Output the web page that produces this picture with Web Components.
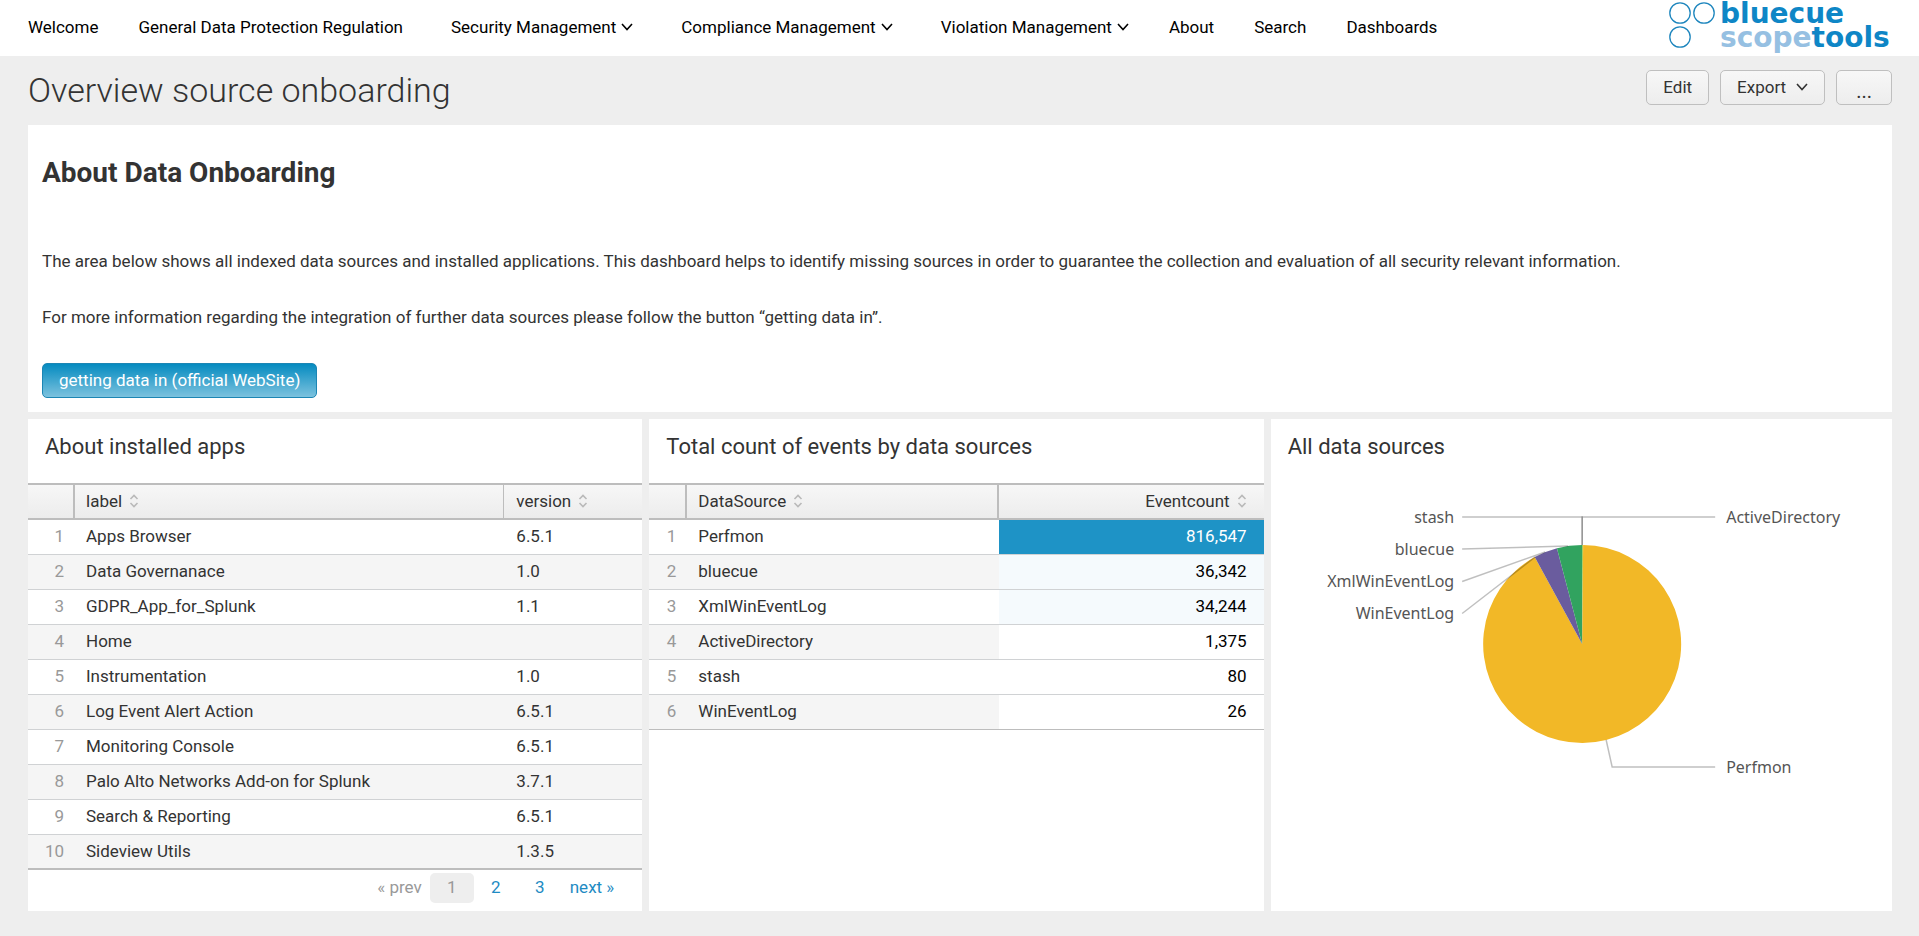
<!DOCTYPE html>
<html lang="en">
<head>
<meta charset="utf-8">
<title>Overview source onboarding</title>
<style>
body { margin: 0; background: #eee; color: #333; font: 17px/24px Roboto, "Liberation Sans", sans-serif; }
</style>
</head>
<body>
<app-bar></app-bar>
<main>
  <dashboard-header heading="Overview source onboarding"></dashboard-header>
  <dashboard-body>
    <intro-panel slot="intro" heading="About Data Onboarding">
      <p>The area below shows all indexed data sources and installed applications. This dashboard helps to identify missing sources in order to guarantee the collection and evaluation of all security relevant information.</p>
      <p>For more information regarding the integration of further data sources please follow the button “getting data in”.</p>
    </intro-panel>
    <dashboard-panel heading="About installed apps">
      <apps-table></apps-table>
      <page-nav></page-nav>
    </dashboard-panel>
    <dashboard-panel heading="Total count of events by data sources">
      <events-table></events-table>
    </dashboard-panel>
    <dashboard-panel heading="All data sources">
      <source-pie></source-pie>
    </dashboard-panel>
  </dashboard-body>
</main>
<script>
class BaseElement extends HTMLElement {
  connectedCallback() {
    if (this.shadowRoot) return;
    this.attachShadow({ mode: 'open' }).innerHTML =
      `<style>:host,*{box-sizing:border-box}${this.styles()}</style>${this.markup()}`;
  }
}

const chevron = '<svg class="chev" width="12" height="8" viewBox="0 0 12 8" aria-hidden="true"><path d="M1 1l5 5.5L11 1" fill="none" stroke="currentColor" stroke-width="1.6"/></svg>';

customElements.define('brand-logo', class extends BaseElement {
  styles() { return `:host{display:block}svg{display:block}text{font:700 28px "DejaVu Sans",sans-serif}`; }
  markup() {
    return `<svg width="225" height="56" viewBox="0 0 225 56" role="img" aria-label="bluecue scopetools">
      <g fill="#fff" stroke="#1c85bd" stroke-width="1.3"><circle cx="13" cy="13" r="10.2"/><circle cx="37" cy="13" r="10.2"/><circle cx="13" cy="37" r="10.2"/></g>
      <text x="53" y="23" fill="#0e86c6">bluecue</text>
      <text x="53" y="47" fill="#96c0e2">scope<tspan fill="#0e86c6">tools</tspan></text></svg>`;
  }
});

customElements.define('app-bar', class extends BaseElement {
  styles() { return `
    :host{display:flex;justify-content:space-between;height:56px;background:#fff;padding:0 27px 2px 8px}
    nav{display:flex;align-items:center}
    a,button{font:inherit;color:#000;text-decoration:none;background:none;border:0;padding:0 20px;white-space:nowrap}
    button{display:flex;align-items:center;gap:5px;margin-left:8px}`; }
  markup() {
    const items = [['Welcome'], ['General Data Protection Regulation'], ['Security Management', 1], ['Compliance Management', 1], ['Violation Management', 1], ['About'], ['Search'], ['Dashboards']];
    return `<nav>${items.map(([t, menu]) => menu ? `<button>${t}${chevron}</button>` : `<a href="#">${t}</a>`).join('')}</nav><brand-logo></brand-logo>`;
  }
});

customElements.define('dashboard-header', class extends BaseElement {
  styles() { return `
    :host{display:flex;justify-content:space-between;height:69px;padding:14px 27px 0 28px}
    h1{margin:0;font-size:34px;line-height:40px;font-weight:300}
    div{display:flex;gap:11px}
    button{height:35px;padding:0 16px 2px;font:inherit;color:#333;border:1px solid #bfbfbf;border-radius:5px;background:linear-gradient(#f7f7f7,#ededed);display:flex;align-items:center;gap:10px}
    .more{padding:6px 19px 0;font-size:20px}`; }
  markup() { return `<h1>${this.getAttribute('heading')}</h1><div><button>Edit</button><button>Export${chevron}</button><button class="more" aria-label="More actions">...</button></div>`; }
});

customElements.define('dashboard-body', class extends BaseElement {
  styles() { return `
    :host{display:block;padding:0 27px 26px 28px}
    .row{display:grid;grid-template-columns:repeat(3,minmax(0,1fr));margin-top:7px}
    .row ::slotted(*){padding-right:7px}
    .row ::slotted(:last-child){padding-right:0}`; }
  markup() { return `<slot name="intro"></slot><div class="row"><slot></slot></div>`; }
});

customElements.define('intro-panel', class extends BaseElement {
  styles() { return `
    :host{display:block;background:#fff;padding:28px 14px 14px}
    h2{margin:0 0 56px;font-size:28px;line-height:40px;font-weight:700}
    ::slotted(p){margin:0 0 32px}
    a{display:inline-block;height:35px;margin-top:2px;padding:0 16px;line-height:32px;color:#fff;text-decoration:none;border:1px solid #1c86b4;border-radius:5px;background:linear-gradient(#058bc0,#7cc2de);vertical-align:top}`; }
  markup() { return `<h2>${this.getAttribute('heading')}</h2><slot></slot><a href="#">getting data in (official WebSite)</a>`; }
});

customElements.define('dashboard-panel', class extends BaseElement {
  styles() { return `
    :host{display:flex}
    section{background:#fff;flex:1;min-width:0}
    h3{margin:0;padding:16px 17px 24px;font-size:22px;line-height:24px;font-weight:400}`; }
  markup() { return `<section><h3>${this.getAttribute('heading')}</h3><slot></slot></section>`; }
});

const sorter = '<svg class="sort" width="10" height="14" viewBox="0 0 10 14" aria-hidden="true"><path d="M1.5 5L5 1.5 8.5 5M1.5 9L5 12.5 8.5 9" fill="none" stroke="#b9b9b9" stroke-width="1.6"/></svg>';
const tableStyles = `
  :host{display:block}
  table{width:100%;table-layout:fixed;border-collapse:separate;border-spacing:0}
  th,td{height:35px;padding:0 11px 2px;text-align:left;font-weight:400;border-bottom:1px solid #d0d2d4;white-space:nowrap}
  th{height:37px;border-top:2px solid #bdbdbd;border-bottom:2px solid #bdbdbd;background:linear-gradient(#f7f7f7,#ececec)}
  .sort{margin-left:7px;vertical-align:-1px}
  th:first-child{border-right:2px solid #bdbdbd}
  td:first-child{padding-left:0;text-align:right;color:#999}
  tr:nth-child(even) td{background:#f5f5f5}
  tr:last-child td{border-bottom-color:#bdbdbd}`;

customElements.define('apps-table', class extends BaseElement {
  styles() { return tableStyles + `
    .n{width:47px}.v{width:139px}th:last-child{border-left:1px solid #bdbdbd;padding-left:12px}td:last-child{padding-left:13px}
    tr:last-child td{border-bottom-width:2px}`; }
  markup() {
    const rows = [['Apps Browser', '6.5.1'], ['Data Governanace', '1.0'], ['GDPR_App_for_Splunk', '1.1'], ['Home', ''], ['Instrumentation', '1.0'], ['Log Event Alert Action', '6.5.1'], ['Monitoring Console', '6.5.1'], ['Palo Alto Networks Add-on for Splunk', '3.7.1'], ['Search &amp; Reporting', '6.5.1'], ['Sideview Utils', '1.3.5']];
    return `<table><colgroup><col class="n"><col><col class="v"></colgroup><thead><tr><th></th><th>label${sorter}</th><th>version${sorter}</th></tr></thead>
      <tbody>${rows.map((r, i) => `<tr><td>${i + 1}</td><td>${r[0]}</td><td>${r[1]}</td></tr>`).join('')}</tbody></table>`;
  }
});

customElements.define('events-table', class extends BaseElement {
  styles() { return tableStyles + `
    .n{width:38px}.v{width:265px}
    th:nth-child(2){border-right:2px solid #bdbdbd}
    th:last-child,td:last-child{text-align:right;padding-right:17px;color:#000}
    th:last-child{color:#333}
    tbody tr td:last-child{background:var(--heat)}
    tr:first-child td:last-child{color:#fff}`; }
  markup() {
    const rows = [['Perfmon', '816,547', '#1e93c6'], ['bluecue', '36,342', '#f5fafd'], ['XmlWinEventLog', '34,244', '#f5fafd'], ['ActiveDirectory', '1,375', '#fff'], ['stash', '80', '#fff'], ['WinEventLog', '26', '#fff']];
    return `<table><colgroup><col class="n"><col><col class="v"></colgroup><thead><tr><th></th><th>DataSource${sorter}</th><th>Eventcount${sorter}</th></tr></thead>
      <tbody>${rows.map((r, i) => `<tr><td>${i + 1}</td><td>${r[0]}</td><td style="--heat:${r[2]}">${r[1]}</td></tr>`).join('')}</tbody></table>`;
  }
});

customElements.define('page-nav', class extends BaseElement {
  styles() { return `
    :host{display:block;padding:3px 16px 8px}
    nav{display:flex;justify-content:flex-end}
    a,span{min-width:44px;height:30px;line-height:28px;padding:0 8px;text-align:center;color:#1e8bc3;text-decoration:none;border-radius:5px}
    span{color:#999}.current{background:#eee}a:last-child{padding-right:12px}`; }
  markup() { return `<nav aria-label="Pages"><span>« prev</span><span class="current" aria-current="page">1</span><a href="#">2</a><a href="#">3</a><a href="#">next »</a></nav>`; }
});

customElements.define('source-pie', class extends BaseElement {
  styles() { return `
    :host{display:block}
    svg{display:block;width:100%;height:427px}
    text{font:16px "Noto Sans","Open Sans",sans-serif;fill:#555}
    .lead{fill:none;stroke:#000;stroke-opacity:.25;stroke-width:1.5}`; }
  markup() {
    const cx = 311, cy = 161, r = 99;
    const data = [['#a2cc3e', 1375], ['#f2b827', 816547], ['#d6563c', 26], ['#6a5c9e', 34244], ['#31a35f', 36342], ['#ed8440', 80]];
    const total = data.reduce((s, d) => s + d[1], 0);
    const at = f => `${cx + r * Math.sin(2 * Math.PI * f)} ${cy - r * Math.cos(2 * Math.PI * f)}`;
    let from = 0;
    const slices = data.map(([color, n]) => {
      const to = from + n / total;
      const path = `<path d="M${cx} ${cy}L${at(from)}A${r} ${r} 0 ${n / total > .5 ? 1 : 0} 1 ${at(to)}Z" fill="${color}"/>`;
      from = to;
      return path;
    }).join('');
    const leads = ['M191 34H311V62', 'M444 34H311V62', 'M191 66L297 63', 'M191 98.5L274 69', 'M191 130.5L264 74', 'M335 257L341 284H444'];
    const labels = [['stash', 183, 40, 1], ['bluecue', 183, 72, 1], ['XmlWinEventLog', 183, 104, 1], ['WinEventLog', 183, 136, 1], ['ActiveDirectory', 455, 40], ['Perfmon', 455, 290]];
    return `<svg viewBox="0 0 621 427" role="img" aria-label="Events by data source">${slices}
      ${leads.map(d => `<path class="lead" d="${d}"/>`).join('')}
      ${labels.map(([t, x, y, end]) => `<text x="${x}" y="${y}"${end ? ' text-anchor="end"' : ''}>${t}</text>`).join('')}</svg>`;
  }
});
</script>
</body>
</html>
